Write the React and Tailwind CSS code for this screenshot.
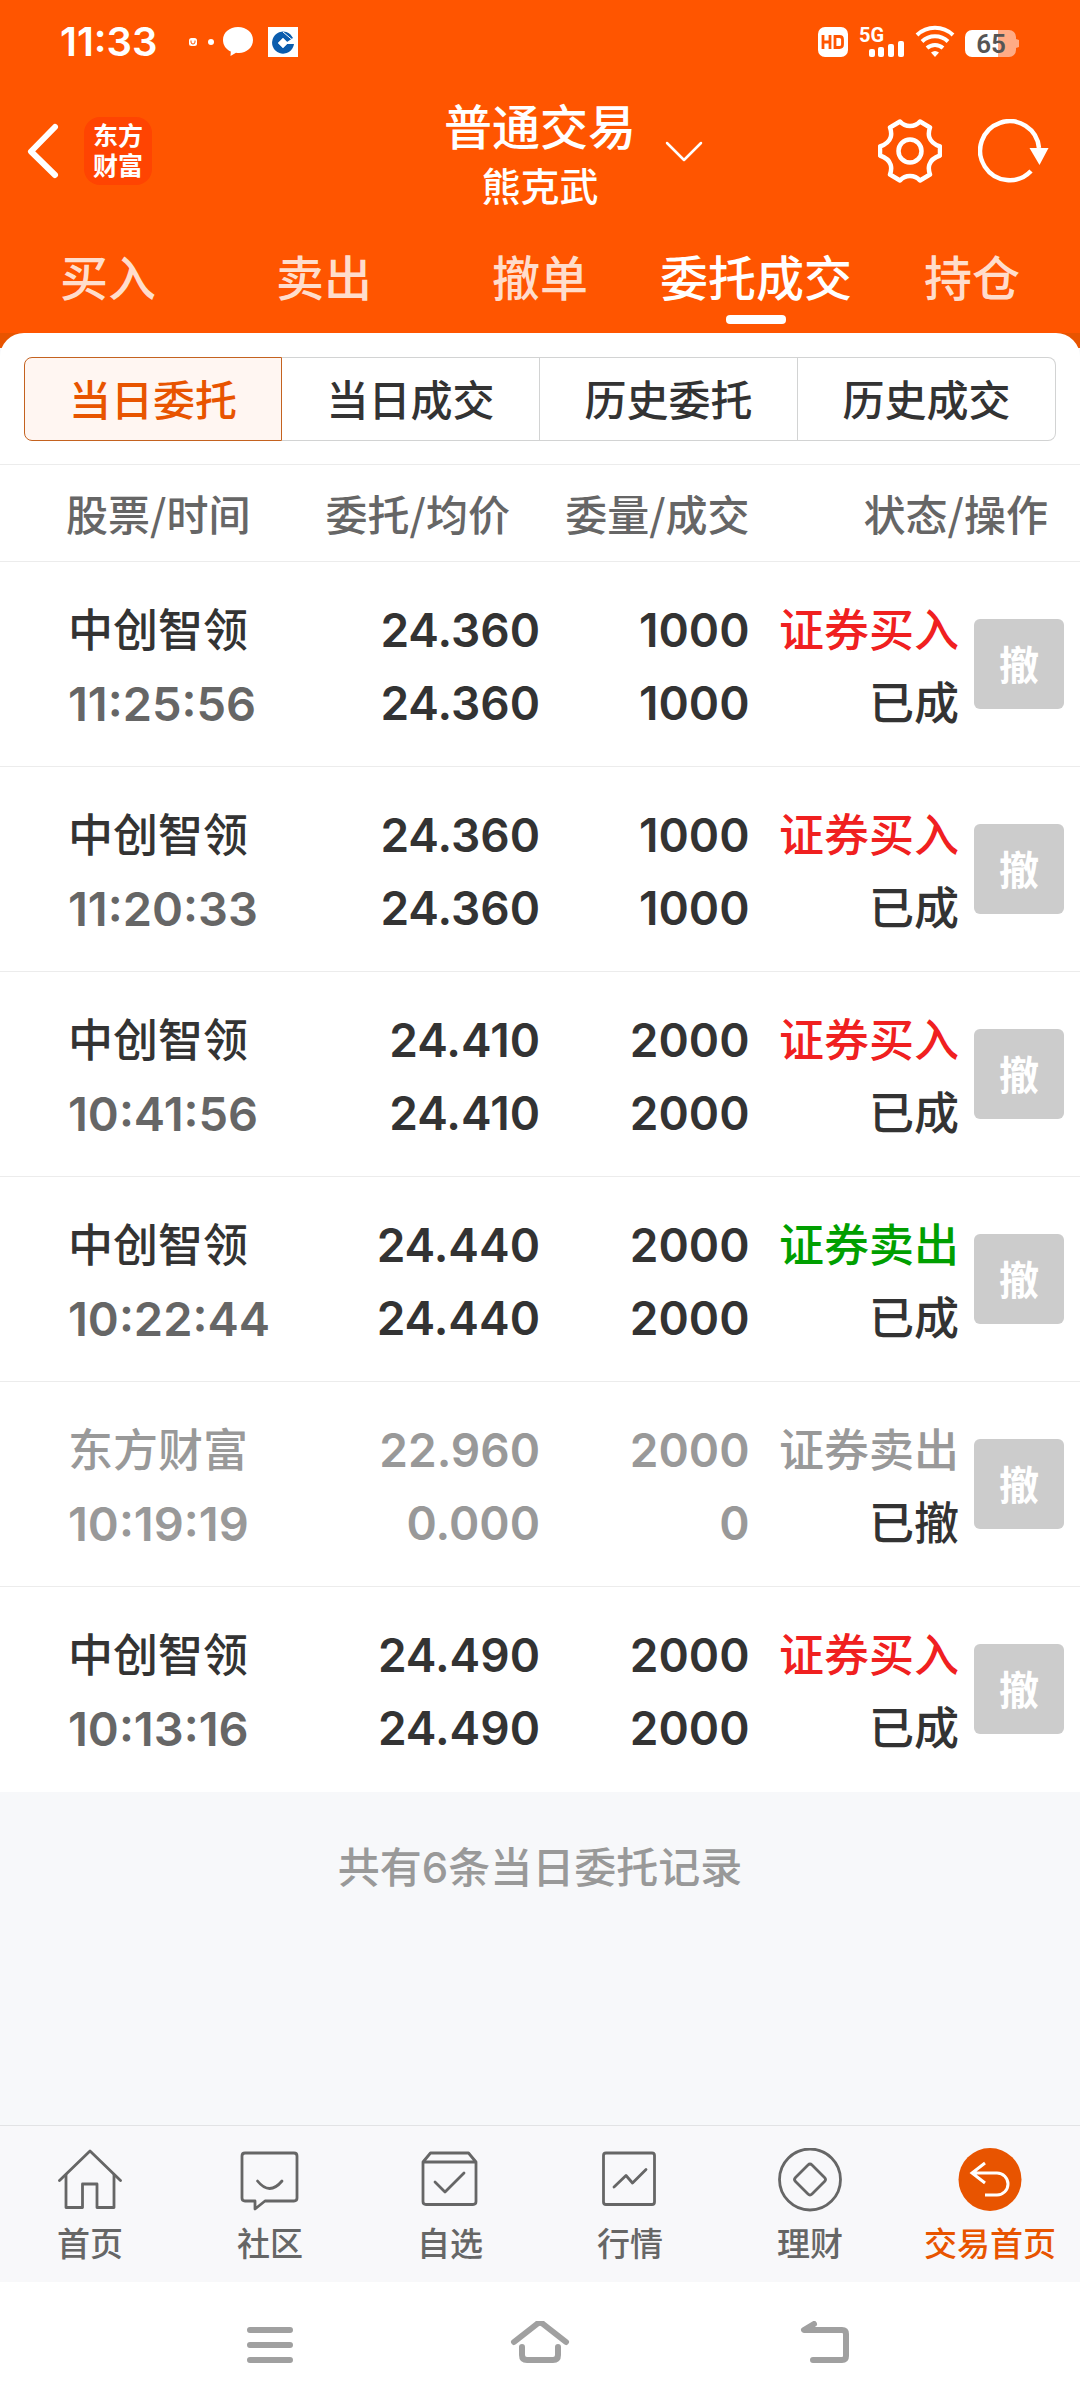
import React from "react";

const FONT = 'font-[Inter,"Noto_Sans_CJK_SC",sans-serif]';

const TABS = ["买入", "卖出", "撤单", "委托成交", "持仓"];
const SEGMENTS = ["当日委托", "当日成交", "历史委托", "历史成交"];

const ORDERS = [
  { name: "中创智领", time: "11:25:56", price: "24.360", avg: "24.360", qty: "1000", done: "1000", side: "证券买入", kind: "buy", state: "已成" },
  { name: "中创智领", time: "11:20:33", price: "24.360", avg: "24.360", qty: "1000", done: "1000", side: "证券买入", kind: "buy", state: "已成" },
  { name: "中创智领", time: "10:41:56", price: "24.410", avg: "24.410", qty: "2000", done: "2000", side: "证券买入", kind: "buy", state: "已成" },
  { name: "中创智领", time: "10:22:44", price: "24.440", avg: "24.440", qty: "2000", done: "2000", side: "证券卖出", kind: "sell", state: "已成" },
  { name: "东方财富", time: "10:19:19", price: "22.960", avg: "0.000", qty: "2000", done: "0", side: "证券卖出", kind: "void", state: "已撤" },
  { name: "中创智领", time: "10:13:16", price: "24.490", avg: "24.490", qty: "2000", done: "2000", side: "证券买入", kind: "buy", state: "已成" },
];

const SIDE_COLOR = {
  buy: "text-[#f02020]",
  sell: "text-[#009f00]",
  void: "text-[#999999]",
};

function StatusBar() {
  return (
    <div className="flex h-21 items-center justify-between px-15 text-white">
      <div className="flex items-center">
        <span className="w-32 text-[40px] leading-none font-semibold">11:33</span>
        <svg className="h-8 w-28" viewBox="0 0 112 32" aria-hidden="true">
          <rect x="1" y="12" width="8" height="8" rx="2.5" fill="#fff" />
          <path d="M3 14.5v1.5a2 2 0 0 0 4 0v-1.5" fill="none" stroke="#ff5500" strokeWidth="1" />
          <circle cx="23" cy="16" r="3" fill="#fff" />
          <path d="M50 1c8.500 0 15 5.500 15 13s-6.500 13-14 13c-1 0-2 0-3-.2L42.500 30l.3-4.500C38 23.500 35 19 35 14 35 6.500 41.500 1 50 1z" fill="#fff" />
          <rect x="80" y="1" width="30" height="30" fill="#fff" />
          <path d="M102.500 8.500A11 11 0 1 0 106 18h-7l-4 4-5-5 5-5 4 4 6-4z" fill="#0a5cad" />
          <path d="M95 6l9.500 8" stroke="#fff" strokeWidth="1" />
          <path d="M95 12l5 5-5 5-5-5z" fill="#fff" />
        </svg>
      </div>
      <svg className="h-8 w-51 overflow-visible" viewBox="1 0 204 32" aria-hidden="true">
        <rect x="3" y="1" width="30" height="30" rx="7" fill="#fff" />
        <path d="M8 9v14M15 9v14M8 16h7M20 10.500h4.500q3 0 3 3v5q0 3-3 3H20z" fill="none" stroke="#ff5500" strokeWidth="2.800" />
        <text x="44" y="16" fontSize="20" fontWeight="700" fontFamily="Roboto, sans-serif" fill="#fff">5G</text>
        <rect x="54" y="23" width="6" height="8" rx="2" fill="#fff" />
        <rect x="63" y="21" width="6" height="10" rx="2" fill="#fff" />
        <rect x="73" y="18" width="6" height="13" rx="2" fill="#fff" />
        <rect x="83" y="15" width="6" height="16" rx="2" fill="#fff" />
        <g fill="none" stroke="#fff" strokeWidth="4">
          <path d="M102 9a26 26 0 0 1 36 0" />
          <path d="M107 15.500a19 19 0 0 1 26 0" />
          <path d="M112 22a12 12 0 0 1 16 0" />
        </g>
        <path d="M116 26.500q4-3 8 0L120 31z" fill="#fff" />
        <path d="M157 4h26v27h-26a7 7 0 0 1-7-7V11a7 7 0 0 1 7-7z" fill="#fff" />
        <path d="M183 4h11a7 7 0 0 1 7 7v2l3 1v7l-3 1v2a7 7 0 0 1-7 7h-11z" fill="#ffab85" />
        <text x="176" y="27" textAnchor="middle" fontSize="26" fontWeight="600" fontFamily="Roboto, sans-serif" fill="#555">65</text>
      </svg>
    </div>
  );
}

function AppHeader() {
  return (
    <div className="grid grid-cols-[1fr_auto_1fr] items-center px-6 pt-2 text-white">
      <div className="flex items-center gap-6">
        <button type="button" aria-label="返回">
          <svg className="h-14 w-9" viewBox="0 0 36 56" fill="none" stroke="#fff" strokeWidth="6" strokeLinecap="round" strokeLinejoin="round">
            <path d="M31 4L7 28.500 31 52" />
          </svg>
        </button>
        <div className="flex h-17 w-17 flex-col items-center justify-center rounded-2xl bg-[#ff4402] text-[25px] leading-[30px] font-bold">
          <span>东方</span>
          <span>财富</span>
        </div>
      </div>
      <button type="button" className="flex items-center gap-7 font-medium">
        <span className="w-10" />
        <span className="flex flex-col items-center">
          <span className="text-[48px] leading-[72px]">普通交易</span>
          <span className="text-[39px] leading-[46px]">熊克武</span>
        </span>
        <svg className="h-6 w-10" viewBox="0 0 40 24" fill="none" stroke="#fff" strokeWidth="2.500" strokeLinecap="round" strokeLinejoin="round" aria-hidden="true">
          <path d="M3 4l17 17L37 4" />
        </svg>
      </button>
      <div className="flex items-center justify-end gap-9 pr-1.5">
        <button type="button" aria-label="设置">
          <svg className="h-16 w-16" viewBox="0 0 64 64" fill="none" stroke="#fff" strokeWidth="4.500" strokeLinejoin="round">
            <path d="M22 2.500Q26 7 32 7T42 2.500L52 8.500C50 14 49 23 62 27.500V36.500C49 41 50 50 52 55.500L42 61.500Q38 57 32 57T22 61.500L12 55.500C14 50 15 41 2 36.500V27.500C15 23 14 14 12 8.500z" />
            <circle cx="32" cy="32" r="11.500" />
          </svg>
        </button>
        <button type="button" aria-label="刷新">
          <svg className="h-16 w-18" viewBox="0 0 72 64" fill="none">
            <path d="M53 52A29.500 29.500 0 1 1 61 29" stroke="#fff" strokeWidth="4.500" />
            <path d="M51.500 29h19L61.500 46z" fill="#fff" />
          </svg>
        </button>
      </div>
    </div>
  );
}

function MainTabs() {
  return (
    <nav className="grid grid-cols-5 pt-[33px] pb-6">
      {TABS.map((t) => {
        const active = t === "委托成交";
        return (
          <a key={t} href="#" className="flex flex-col items-center text-[48px] leading-[72px] font-medium whitespace-nowrap">
            <span className={active ? "text-white" : "text-[#ffddcc]"}>{t}</span>
            <span className={active ? "h-[9px] w-15 rounded-sm bg-white" : "h-[9px] w-15"} />
          </a>
        );
      })}
    </nav>
  );
}

function Segments() {
  return (
    <div className="grid grid-cols-4 px-6 pt-6 pb-[23px] text-[42px] leading-none font-medium">
      {SEGMENTS.map((s, i) => (
        <button
          key={s}
          type="button"
          className={
            i === 0
              ? "h-21 rounded-l-lg border border-[#c4621f] bg-[#fff6f2] pt-1 text-[#e85400]"
              : "h-21 border-y border-r border-[#d2d3d3] pt-1 text-[#333333] last:rounded-r-lg"
          }
        >
          {s}
        </button>
      ))}
    </div>
  );
}

function OrderTable() {
  return (
    <table className="w-full table-fixed border-collapse">
      <colgroup>
        <col className="w-[30%]" />
        <col className="w-[20%]" />
        <col className="w-[19.4%]" />
        <col className="w-[19.4%]" />
        <col />
      </colgroup>
      <thead>
        <tr className='h-[97px] border-y border-[#ececec] font-["Noto_Sans_CJK_SC",sans-serif] text-[42px] leading-none whitespace-nowrap text-[#666666]'>
          <th className="pl-16.5 text-left font-medium">股票/时间</th>
          <th className="pr-7.5 text-right font-medium">委托/均价</th>
          <th className="text-right font-medium">委量/成交</th>
          <th colSpan={2} className="pr-8 text-right font-medium">状态/操作</th>
        </tr>
      </thead>
      <tbody>
        {ORDERS.map((o) => {
          const muted = o.kind === "void";
          const main = muted ? "text-[#999999]" : "text-[#333333]";
          return (
            <tr key={o.time} className="h-[205px] border-b border-[#ececec] text-[45px] leading-[73px] font-medium whitespace-nowrap last:border-b-0">
              <td className="pt-1.5 pl-17">
                <div className={main}>{o.name}</div>
                <div className={muted ? "text-[47px] font-semibold text-[#999999]" : "text-[47px] font-semibold text-[#666666]"}>{o.time}</div>
              </td>
              <td className={`pt-1.5 text-right text-[46px] font-semibold ${main}`}>
                <div>{o.price}</div>
                <div>{o.avg}</div>
              </td>
              <td className={`pt-1.5 text-right text-[46px] font-semibold ${main}`}>
                <div>{o.qty}</div>
                <div>{o.done}</div>
              </td>
              <td className="pt-1.5 text-right">
                <div className={SIDE_COLOR[o.kind]}>{o.side}</div>
                <div className="text-[#333333]">{o.state}</div>
              </td>
              <td className="pr-4">
                <button type="button" disabled className="ml-auto flex h-22.5 w-22.5 items-center justify-center rounded-md bg-[#cccccc] pt-1 text-[40px] leading-none font-bold text-white">
                  撤
                </button>
              </td>
            </tr>
          );
        })}
      </tbody>
    </table>
  );
}

const line = { fill: "none", stroke: "#666", strokeWidth: 2.8, strokeLinejoin: "round", strokeLinecap: "round" };

const NAV = [
  {
    label: "首页",
    icon: (
      <g {...line}>
        <path d="M1.500 32.500L32 3l30.500 29.500" />
        <path d="M8 27v32.500h16.500V36h14.500v23.500H56V27" />
      </g>
    ),
  },
  {
    label: "社区",
    icon: (
      <g {...line}>
        <path d="M7 5h49q3 0 3 3v42q0 3-3 3H27l-10 8v-8H7q-3 0-3-3V8q0-3 3-3z" />
        <path d="M19.500 33q12 15 24.500 0" />
      </g>
    ),
  },
  {
    label: "自选",
    icon: (
      <g {...line}>
        <path d="M5 14l7.500-9h38l7.500 9v39.500q0 3-3 3H8q-3 0-3-3zh53" />
        <path d="M17 34l10 10 19-19" />
      </g>
    ),
  },
  {
    label: "行情",
    icon: (
      <g {...line}>
        <rect x="5.500" y="5" width="51" height="51.500" rx="2.500" />
        <path d="M16 39l12-11.500 6.500 7.500 13.500-13.500" />
      </g>
    ),
  },
  {
    label: "理财",
    icon: (
      <g {...line}>
        <circle cx="32" cy="31.500" r="30.500" />
        <path d="M30 17q2-2 4 0l12.500 12.500q2 2 0 4L34 46q-2 2-4 0L17.500 33.500q-2-2 0-4z" />
      </g>
    ),
  },
  {
    label: "交易首页",
    active: true,
    icon: (
      <g>
        <circle cx="32" cy="31.500" r="31.500" fill="#e85400" />
        <path d="M27 15L14 25l13 10M15 25h24a11 11 0 0 1 0 22H27" fill="none" stroke="#fff" strokeWidth="3" />
      </g>
    ),
  },
];

function BottomNav() {
  return (
    <nav className="grid h-[157px] grid-cols-6 border-t border-[#e2e3e5] bg-[#f8f8fa] pt-[22px]">
      {NAV.map((n) => (
        <a key={n.label} href="#" className="flex flex-col items-center gap-2">
          <svg className="h-16 w-16" viewBox="0 0 64 64" aria-hidden="true">{n.icon}</svg>
          <span className={n.active ? "text-[33px] leading-[48px] font-medium whitespace-nowrap text-[#e85400]" : "text-[33px] leading-[48px] font-medium whitespace-nowrap text-[#666666]"}>{n.label}</span>
        </a>
      ))}
    </nav>
  );
}

function SystemBar() {
  const s = { fill: "none", stroke: "#a0a0a0", strokeWidth: 6, strokeLinecap: "round", strokeLinejoin: "round" };
  return (
    <div className="flex h-[126px] items-center justify-around bg-white px-[135px]">
      <button type="button" aria-label="最近任务">
        <svg className="h-12 w-24" viewBox="0 0 96 48" {...s}>
          <path d="M28 9h40M28 24h40M28 39h40" />
        </svg>
      </button>
      <button type="button" aria-label="主屏幕">
        <svg className="h-12 w-24" viewBox="0 0 96 48" {...s}>
          <path d="M22 21L45 3q3-2.500 6 0l23 18" />
          <path d="M30 26v8q0 5 5 5h26q5 0 5-5v-8" />
        </svg>
      </button>
      <button type="button" aria-label="系统返回">
        <svg className="h-12 w-24" viewBox="0 0 96 48" {...s}>
          <path d="M52 3L42 9h38q4 0 4 4v22q0 4-4 4H51" />
        </svg>
      </button>
    </div>
  );
}

export default function App() {
  return (
    <div className={`flex min-h-screen flex-col bg-[#f7f8fa] ${FONT}`}>
      <header className="bg-linear-to-t from-[#e85400] from-[15px] to-[#ff5500] to-[15px]">
        <StatusBar />
        <AppHeader />
        <MainTabs />
      </header>
      <main className="flex flex-1 flex-col">
        <div className="-mt-[15px] rounded-t-3xl bg-white">
          <Segments />
          <OrderTable />
        </div>
        <p className="pt-11 text-center text-[42px] leading-[64px] font-medium text-[#999999]">共有6条当日委托记录</p>
      </main>
      <BottomNav />
      <SystemBar />
    </div>
  );
}
